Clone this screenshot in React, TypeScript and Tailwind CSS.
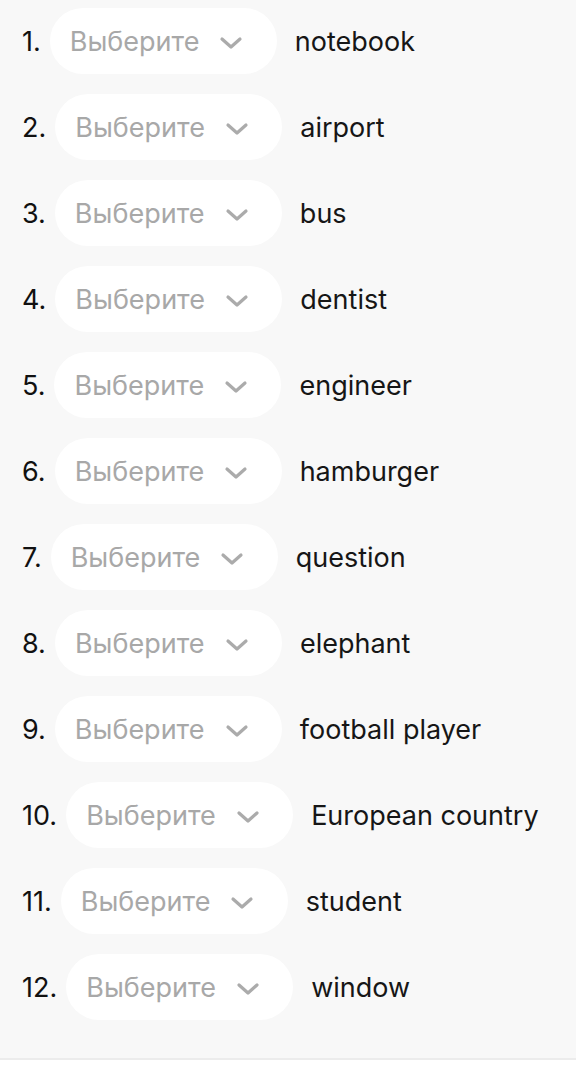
const words = [
  'notebook',
  'airport',
  'bus',
  'dentist',
  'engineer',
  'hamburger',
  'question',
  'elephant',
  'football player',
  'European country',
  'student',
  'window',
];

function Chevron() {
  return (
    <svg width="24" height="14" viewBox="0 0 24 14" fill="none" className="shrink-0">
      <polyline
        points="3,3 12,11 21,3"
        stroke="#ababab"
        strokeWidth="3.2"
        strokeLinecap="round"
        strokeLinejoin="round"
      />
    </svg>
  );
}

export default function App() {
  return (
    <div className="w-[576px] min-h-[1078px] bg-white font-['Inter',sans-serif]">
      <div className="bg-[#f8f8f8] border-b-2 border-[#ececec] pt-[8px] pb-[38px] pl-[22px] flex flex-col gap-[20px]">
        {words.map((w, i) => (
          <div key={i} className="flex items-center h-[66px]">
            <span className="text-[27px] text-[#111] leading-none">{i + 1}.</span>
            <div className="ml-[9px] h-[66px] w-[227px] bg-white rounded-full flex items-center pl-[20px]">
              <span className="text-[27px] text-[#a8a8a8] leading-none">Выберите</span>
              <span className="ml-[20px] mt-[4px]">
                <Chevron />
              </span>
            </div>
            <span className="ml-[18px] text-[27px] text-[#161616] leading-none">{w}</span>
          </div>
        ))}
      </div>
    </div>
  );
}
